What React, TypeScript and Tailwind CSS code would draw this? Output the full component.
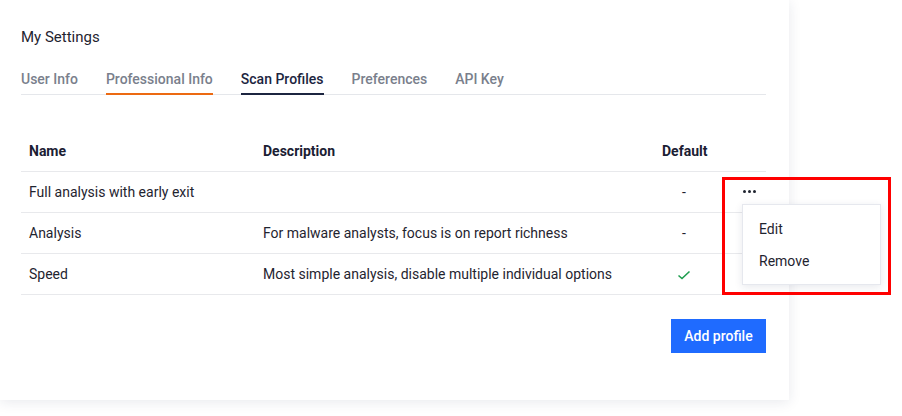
import React from "react";

interface Profile {
  name: string;
  description: string;
  isDefault: boolean;
}

const profiles: Profile[] = [
  { name: "Full analysis with early exit", description: "", isDefault: false },
  {
    name: "Analysis",
    description: "For malware analysts, focus is on report richness",
    isDefault: false,
  },
  {
    name: "Speed",
    description: "Most simple analysis, disable multiple individual options",
    isDefault: true,
  },
];

const tabs = ["User Info", "Professional Info", "Scan Profiles", "Preferences", "API Key"];

export default function App() {
  return (
    <div
      className="relative w-[902px] h-[416px] bg-white overflow-hidden text-[#1f2430]"
      style={{ fontFamily: "Roboto, 'Liberation Sans', sans-serif" }}
    >
      <div className="w-[789px] h-[400px] bg-white pt-[27px] pl-[21px] pr-[23px] shadow-[0_2px_12px_rgba(30,40,80,0.10)]">
        <h1 className="text-[15px] leading-[20px] text-[#1f2430]">My Settings</h1>

        <div className="mt-[22px] flex gap-[28px] border-b border-[#e5e7eb]">
          {tabs.map((tab) => (
            <div
              key={tab}
              className={
                "pb-[4px] -mb-px border-b-2 text-[14px] leading-[20px] font-medium " +
                (tab === "Scan Profiles"
                  ? "border-[#1c2540] text-[#1c2540]"
                  : tab === "Professional Info"
                  ? "border-[#ec6a12] text-[#7a7f8c]"
                  : "border-transparent text-[#7a7f8c]")
              }
            >
              {tab}
            </div>
          ))}
        </div>

        <div className="mt-[36px] text-[14px]">
          <div className="grid grid-cols-[234px_399px_60px_1fr] h-[41px] items-center border-b border-[#e8e9ec] font-bold text-[#1b2033]">
            <div className="pl-[8px]">Name</div>
            <div className="pl-[8px]">Description</div>
            <div className="pl-[8px]">Default</div>
            <div></div>
          </div>
          {profiles.map((p, i) => (
            <div
              key={p.name}
              className="grid grid-cols-[234px_399px_60px_1fr] h-[41px] items-center border-b border-[#e8e9ec] text-[#1f2430]"
            >
              <div className="pl-[8px]">{p.name}</div>
              <div className="pl-[8px]">{p.description}</div>
              <div className="flex justify-center">
                {p.isDefault ? (
                  <svg width="14" height="10" viewBox="0 0 14 10" className="mt-[2px]">
                    <path d="M1.5 5.5 L5 8.5 L12.5 1.5" fill="none" stroke="#1f9d4f" strokeWidth="1.6" />
                  </svg>
                ) : (
                  "-"
                )}
              </div>
              <div className="flex justify-end pr-[10px]">
                {i === 0 && (
                  <div className="flex gap-[2px] mb-[2px]">
                    <span className="w-[3px] h-[3px] rounded-full bg-[#1f2430]" />
                    <span className="w-[3px] h-[3px] rounded-full bg-[#1f2430]" />
                    <span className="w-[3px] h-[3px] rounded-full bg-[#1f2430]" />
                  </div>
                )}
              </div>
            </div>
          ))}
        </div>

        <div className="mt-[24px] flex justify-end">
          <button className="h-[34px] w-[95px] bg-[#1f6bff] text-white text-[14px] font-medium">
            Add profile
          </button>
        </div>
      </div>

      {/* dropdown menu for the first row */}
      <div className="absolute left-[742px] top-[204px] w-[139px] h-[81px] bg-white border border-[#e6e8ee] shadow-[0_2px_8px_rgba(30,40,80,0.10)] py-[14px] text-[14px] text-[#1f2430]">
        <div className="pl-[16px] leading-[20px]">Edit</div>
        <div className="pl-[16px] mt-[12px] leading-[20px]">Remove</div>
      </div>

      {/* annotation box */}
      <div className="absolute left-[722px] top-[177px] w-[169px] h-[118px] border-[3px] border-[#ff0000]" />
    </div>
  );
}
